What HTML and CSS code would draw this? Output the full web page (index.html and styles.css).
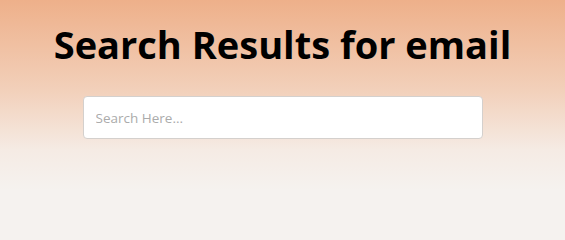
FILE: index.html
```html
<!DOCTYPE html>
<html lang="en">
<head>
<meta charset="utf-8">
<title>Search Results for email</title>
<link rel="stylesheet" href="styles.css">
</head>
<body>
<section class="hero">
  <h1 class="title">Search Results for email</h1>
  <form class="search-form">
    <input class="search-input" type="text" placeholder="Search Here...">
  </form>
</section>
</body>
</html>
```
FILE: styles.css
```css
html, body {
  margin: 0;
  padding: 0;
}
body {
  width: 565px;
  height: 200px;
  overflow: hidden;
  font-family: "Open Sans", "Noto Sans", sans-serif;
  background: #f5f2ef;
}
.hero {
  height: 200px;
  box-sizing: border-box;
  padding-top: 20px;
  display: flex;
  flex-direction: column;
  align-items: center;
  background: linear-gradient(to bottom, #eeb08a 0%, #f2d0ba 45%, #f5ebe4 75%, #f5f2ef 95%);
}
.title {
  margin: 0;
  font-size: 38px;
  line-height: 48px;
  font-weight: 700;
  color: #000;
  text-align: center;
}
.search-form {
  margin-top: 28px;
  display: flex;
  justify-content: center;
}
.search-input {
  width: 400px;
  height: 43px;
  box-sizing: border-box;
  border: 1px solid #d4d0cd;
  border-radius: 4px;
  padding: 0 12px;
  background: #fff;
  font-family: "Open Sans", "Noto Sans", sans-serif;
  font-size: 13.5px;
  color: #333;
  outline: none;
}
.search-input::placeholder {
  color: #ababab;
}
```
